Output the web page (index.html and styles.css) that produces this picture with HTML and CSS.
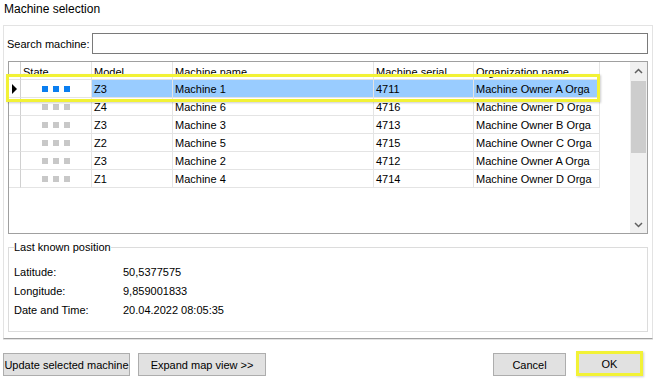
FILE: index.html
```html
<!DOCTYPE html>
<html lang="en">
<head>
    <meta charset="UTF-8">
    <title>Machine selection</title>
    <link rel="stylesheet" href="styles.css">
</head>
<body>
    <div class="title">Machine selection</div>
    <div class="panel">
        <div class="search">
            <label class="search-label" for="search">Search machine:</label>
            <input class="search-input" id="search" type="text">
        </div>
        <div class="grid">
            <div class="grid-body">
                <div class="row head">
                    <div class="cell rh"></div>
                    <div class="cell">State</div>
                    <div class="cell">Model</div>
                    <div class="cell">Machine name</div>
                    <div class="cell">Machine serial</div>
                    <div class="cell">Organization name</div>
                </div>
                <div class="row selected">
                    <div class="cell rh"><span class="arrow"></span></div>
                    <div class="cell state"><i class="sq on"></i><i class="sq on"></i><i class="sq on"></i></div>
                    <div class="cell">Z3</div>
                    <div class="cell">Machine 1</div>
                    <div class="cell">4711</div>
                    <div class="cell">Machine Owner A Orga</div>
                </div>
                <div class="row">
                    <div class="cell rh"></div>
                    <div class="cell state"><i class="sq"></i><i class="sq"></i><i class="sq"></i></div>
                    <div class="cell">Z4</div>
                    <div class="cell">Machine 6</div>
                    <div class="cell">4716</div>
                    <div class="cell">Machine Owner D Orga</div>
                </div>
                <div class="row">
                    <div class="cell rh"></div>
                    <div class="cell state"><i class="sq"></i><i class="sq"></i><i class="sq"></i></div>
                    <div class="cell">Z3</div>
                    <div class="cell">Machine 3</div>
                    <div class="cell">4713</div>
                    <div class="cell">Machine Owner B Orga</div>
                </div>
                <div class="row">
                    <div class="cell rh"></div>
                    <div class="cell state"><i class="sq"></i><i class="sq"></i><i class="sq"></i></div>
                    <div class="cell">Z2</div>
                    <div class="cell">Machine 5</div>
                    <div class="cell">4715</div>
                    <div class="cell">Machine Owner C Orga</div>
                </div>
                <div class="row">
                    <div class="cell rh"></div>
                    <div class="cell state"><i class="sq"></i><i class="sq"></i><i class="sq"></i></div>
                    <div class="cell">Z3</div>
                    <div class="cell">Machine 2</div>
                    <div class="cell">4712</div>
                    <div class="cell">Machine Owner A Orga</div>
                </div>
                <div class="row">
                    <div class="cell rh"></div>
                    <div class="cell state"><i class="sq"></i><i class="sq"></i><i class="sq"></i></div>
                    <div class="cell">Z1</div>
                    <div class="cell">Machine 4</div>
                    <div class="cell">4714</div>
                    <div class="cell">Machine Owner D Orga</div>
                </div>
            </div>
            <div class="vscroll">
                <div class="sb-btn">
                    <svg width="9" height="6" viewBox="0 0 9 6"><path d="M1 5 L4.5 1.5 L8 5" fill="none" stroke="#606060" stroke-width="1.5"/></svg>
                </div>
                <div class="sb-track"><div class="sb-thumb"></div></div>
                <div class="sb-btn">
                    <svg width="9" height="6" viewBox="0 0 9 6"><path d="M1 1 L4.5 4.5 L8 1" fill="none" stroke="#606060" stroke-width="1.5"/></svg>
                </div>
            </div>
            <div class="focus-ring"></div>
        </div>
        <fieldset class="position">
            <legend>Last known position</legend>
            <div class="pos-list">
                <div class="pos-row"><span class="pos-label">Latitude:</span><span>50,5377575</span></div>
                <div class="pos-row"><span class="pos-label">Longitude:</span><span>9,859001833</span></div>
                <div class="pos-row"><span class="pos-label">Date and Time:</span><span>20.04.2022 08:05:35</span></div>
            </div>
        </fieldset>
    </div>
    <div class="actions">
        <button class="btn btn-update">Update selected machine</button>
        <button class="btn btn-expand">Expand map view &gt;&gt;</button>
        <div class="spacer"></div>
        <button class="btn btn-cancel">Cancel</button>
        <button class="btn btn-ok">OK</button>
    </div>
</body>
</html>
```

FILE: styles.css
```css
body {
    margin: 0;
    width: 655px;
    height: 380px;
    overflow: hidden;
    background: #ffffff;
    color: #000000;
    font-family: 'Liberation Sans', Arial, sans-serif;
    font-size: 11px;
}

.title {
    height: 25px;
    box-sizing: border-box;
    padding: 2px 0 0 4px;
    line-height: 14px;
    font-size: 12px;
}

.panel {
    margin-left: 3px;
    width: 650px;
    height: 314px;
    box-sizing: border-box;
    border: 1px solid #e3e3e3;
    border-bottom: 1px solid #a0a0a0;
    box-shadow: 0 1px 0 #e3e3e3;
    padding: 7px 4px 0 4px;
}

.search {
    display: flex;
    align-items: center;
    height: 21px;
}

.search-label {
    width: 85px;
    margin-left: -1px;
}

.search-input {
    flex: 1;
    height: 21px;
    box-sizing: border-box;
    border: 1px solid #7a7a7a;
    margin: 0;
    padding: 0 3px;
    font: inherit;
    outline: none;
}

.grid {
    position: relative;
    display: flex;
    margin-top: 7px;
    height: 173px;
    box-sizing: border-box;
    border: 1px solid #a0a0a0;
}

.grid-body {
    flex: 1;
    background: #ffffff;
}

.row {
    display: grid;
    grid-template-columns: 12px 71px 81px 201px 100px 126px;
    height: 18px;
}

.cell {
    box-sizing: border-box;
    border-right: 1px solid #e4e4e4;
    border-bottom: 1px solid #e4e4e4;
    padding-left: 2px;
    line-height: 18px;
    white-space: nowrap;
    overflow: hidden;
}

.row.head .cell {
    line-height: 20px;
}

.cell.rh {
    padding: 0;
    border-right-color: #d0d0d0;
    position: relative;
}

.selected .cell {
    background: #99ccff;
}

.selected .cell.rh,
.selected .cell.state {
    background: #ffffff;
}

.arrow {
    position: absolute;
    left: 3px;
    top: 4px;
    width: 0;
    height: 0;
    border-top: 5px solid transparent;
    border-bottom: 5px solid transparent;
    border-left: 5px solid #000000;
}

.cell.state {
    display: flex;
    justify-content: center;
    align-items: center;
    gap: 5px;
    padding: 0;
}

.sq {
    display: block;
    width: 6px;
    height: 6px;
    background: #c8c8c8;
}

.sq.on {
    background: #0a7ef0;
}

.vscroll {
    width: 17px;
    display: flex;
    flex-direction: column;
    background: #f0f0f0;
}

.sb-btn {
    height: 17px;
    display: flex;
    align-items: center;
    justify-content: center;
}

.sb-track {
    flex: 1;
    padding: 2px 1px 0 1px;
}

.sb-thumb {
    height: 72px;
    background: #cdcdcd;
}

.focus-ring {
    position: absolute;
    left: -3px;
    top: 12px;
    width: 594px;
    height: 28px;
    box-sizing: border-box;
    border: 3px solid #f2f236;
    box-shadow: 1px 1px 2px rgba(0, 0, 0, 0.2);
}

.position {
    margin: 6px 0 0 0;
    padding: 0 5px 11px 5px;
    border: 1px solid #dcdcdc;
}

.position legend {
    padding: 0;
    line-height: 14px;
}

.pos-list {
    margin-top: 9px;
}

.pos-row {
    display: flex;
    line-height: 19px;
}

.pos-label {
    width: 109px;
}

.actions {
    display: flex;
    align-items: flex-start;
    margin-top: 14px;
    padding: 0 12px 0 3px;
}

.spacer {
    flex: 1;
}

.btn {
    height: 23px;
    box-sizing: border-box;
    margin: 0;
    padding: 0;
    background: #e1e1e1;
    border: 1px solid #adadad;
    font: inherit;
    color: #000000;
}

.btn-update {
    width: 127px;
}

.btn-expand {
    width: 128px;
    margin-left: 8px;
}

.btn-cancel {
    width: 73px;
}

.btn-ok {
    width: 67px;
    height: 25px;
    margin-left: 10px;
    margin-top: -2px;
    border: 3px solid #f2f236;
    box-shadow: 1px 1px 2px rgba(0, 0, 0, 0.2);
}
```
